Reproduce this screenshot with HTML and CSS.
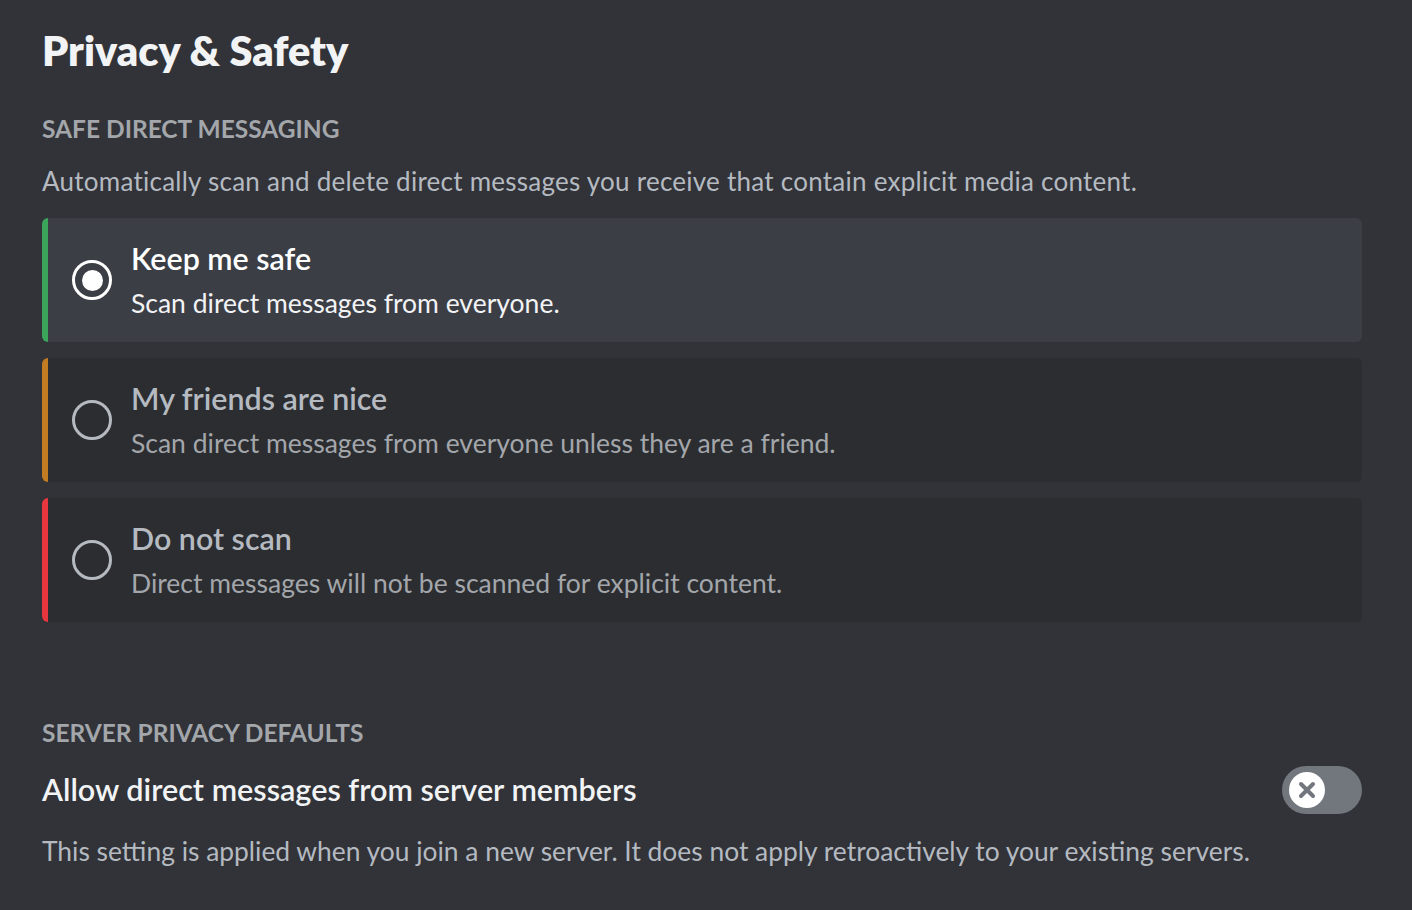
FILE: index.html
```html
<!DOCTYPE html>
<html lang="en">
<head>
    <meta charset="UTF-8">
    <meta name="viewport" content="width=device-width, initial-scale=1.0">
    <title>Privacy &amp; Safety</title>
    <link rel="stylesheet" href="styles.css">
</head>
<body>
    <div class="page">
        <h1>Privacy &amp; Safety</h1>

        <h2>Safe Direct Messaging</h2>
        <p class="desc">Automatically scan and delete direct messages you receive that contain explicit media content.</p>

        <div class="options">
            <div class="option option-green selected">
                <span class="radio"></span>
                <div class="option-text">
                    <div class="option-title">Keep me safe</div>
                    <div class="option-sub">Scan direct messages from everyone.</div>
                </div>
            </div>
            <div class="option option-orange">
                <span class="radio"></span>
                <div class="option-text">
                    <div class="option-title">My friends are nice</div>
                    <div class="option-sub">Scan direct messages from everyone unless they are a friend.</div>
                </div>
            </div>
            <div class="option option-red">
                <span class="radio"></span>
                <div class="option-text">
                    <div class="option-title">Do not scan</div>
                    <div class="option-sub">Direct messages will not be scanned for explicit content.</div>
                </div>
            </div>
        </div>

        <h2 class="second">Server Privacy Defaults</h2>
        <div class="setting-row">
            <div class="setting-title">Allow direct messages from server members</div>
            <div class="toggle">
                <span class="knob">
                    <svg width="22" height="22" viewBox="0 0 22 22">
                        <path d="M5 5 L17 17 M17 5 L5 17" stroke="#72767d" stroke-width="4" stroke-linecap="round"/>
                    </svg>
                </span>
            </div>
        </div>
        <p class="desc bottom">This setting is applied when you join a new server. It does not apply retroactively to your existing servers.</p>
    </div>
</body>
</html>
```

FILE: styles.css
```css
body {
    margin: 0;
    background-color: #313338;
    color: #dbdee1;
    font-family: Lato, "Noto Sans", sans-serif;
}
.page {
    padding: 25px 50px 0 42px;
}
h1 {
    margin: 0;
    font-size: 41.5px;
    font-weight: 800;
    color: #f2f3f5;
    line-height: 50px;
}
h2 {
    margin: 39px 0 0;
    font-size: 24.5px;
    font-weight: 700;
    text-transform: uppercase;
    color: #a3a6aa;
    line-height: 30px;
}
h2.second {
    margin-top: 96px;
}
.desc {
    margin: 21px 0 0;
    font-size: 26px;
    letter-spacing: 0.25px;
    line-height: 32px;
    color: #b5bac1;
}
.options {
    margin-top: 21px;
    display: flex;
    flex-direction: column;
    gap: 16px;
}
.option {
    display: flex;
    align-items: center;
    height: 124px;
    box-sizing: border-box;
    padding-left: 24px;
    background-color: #2b2d31;
    border-left: 6px solid;
    border-radius: 6px;
}
.option.selected {
    background-color: #3c3e45;
}
.option-green { border-left-color: #3ba55c; }
.option-orange { border-left-color: #c27c22; }
.option-red { border-left-color: #e8363f; }
.radio {
    width: 40px;
    height: 40px;
    box-sizing: border-box;
    border: 3.5px solid #b5bac1;
    border-radius: 50%;
    flex-shrink: 0;
    display: flex;
    align-items: center;
    justify-content: center;
}
.selected .radio {
    border-color: #ffffff;
}
.selected .radio::after {
    content: "";
    width: 21px;
    height: 21px;
    border-radius: 50%;
    background-color: #ffffff;
}
.option-text {
    margin-left: 19px;
    margin-top: -2px;
}
.option-title {
    font-size: 30.4px;
    font-weight: 600;
    line-height: 36px;
    color: #b5bac1;
}
.option-sub {
    margin-top: 12px;
    font-size: 26.5px;
    line-height: 30px;
    color: #a3a6aa;
}
.selected .option-title {
    color: #ffffff;
}
.selected .option-sub {
    color: #f2f3f5;
}
.setting-row {
    margin-top: 18px;
    display: flex;
    align-items: center;
    justify-content: space-between;
}
.setting-title {
    font-size: 30.6px;
    font-weight: 600;
    color: #f2f3f5;
    line-height: 36px;
}
.toggle {
    width: 80px;
    height: 48px;
    border-radius: 24px;
    background-color: #72767d;
    display: flex;
    align-items: center;
    padding-left: 7px;
    box-sizing: border-box;
}
.knob {
    width: 36px;
    height: 36px;
    border-radius: 50%;
    background-color: #ffffff;
    display: flex;
    align-items: center;
    justify-content: center;
}
.desc.bottom {
    margin-top: 21px;
    font-size: 26.4px;
    letter-spacing: 0;
}
```
